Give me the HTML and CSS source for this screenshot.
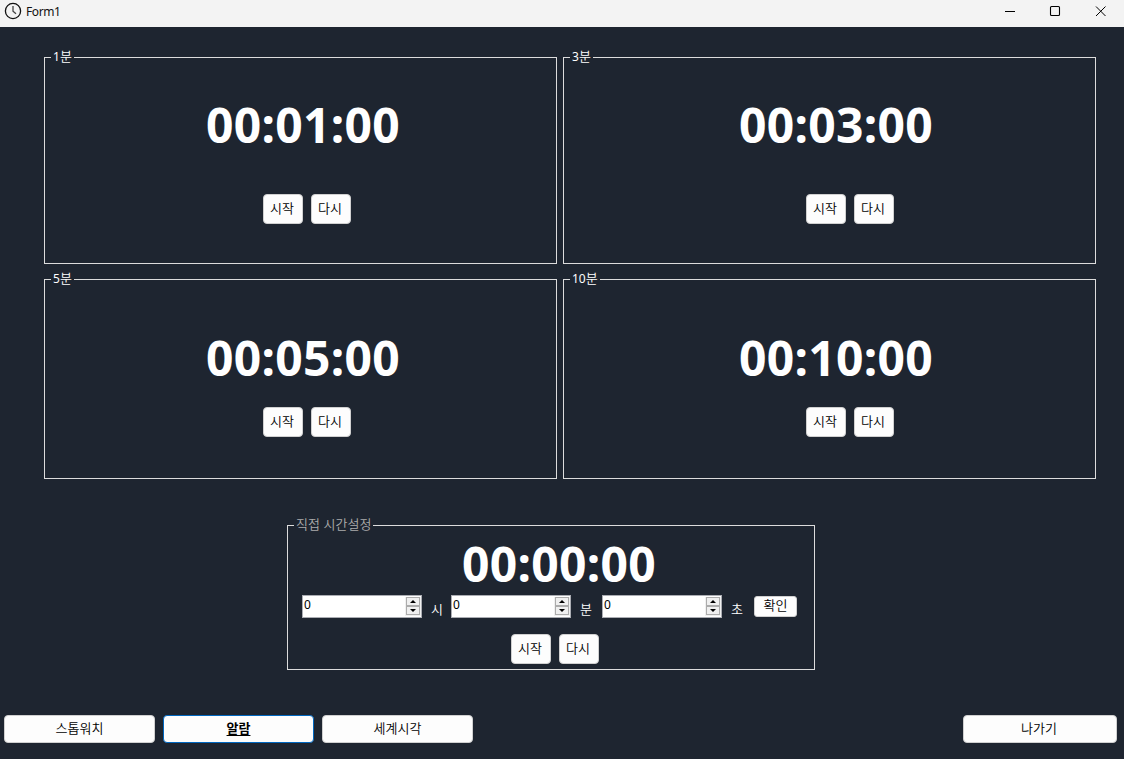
FILE: index.html
```html
<!DOCTYPE html>
<html lang="ko">
<head>
<meta charset="utf-8">
<title>Form1</title>
<link rel="stylesheet" href="styles.css">
</head>
<body>
<header class="titlebar">
  <svg class="app-icon" width="18" height="18" viewBox="0 0 18 18" fill="none" stroke="#111"><circle cx="9" cy="9" r="7.6" stroke-width="1.3"/><path d="M9 4v5.2l3 2.6" stroke="#444" stroke-width="1.3"/></svg>
  <span class="title">Form1</span>
  <div class="window-controls">
    <svg width="46" height="23" viewBox="0 0 46 23"><path d="M19 11.5h10" stroke="#000"/></svg>
    <svg width="46" height="23" viewBox="0 0 46 23"><rect x="18.5" y="6.5" width="9" height="9" rx="1" fill="none" stroke="#000" stroke-width="1.1"/></svg>
    <svg width="46" height="23" viewBox="0 0 46 23"><path d="M18 6.5l9.5 9.5M27.5 6.5l-9.5 9.5" stroke="#000"/></svg>
  </div>
</header>
<main>
  <div class="presets">
    <section class="group upper left"><span class="legend"><span class="n">1</span>분</span>
      <div class="clock">00:01:00</div>
      <div class="actions"><button class="btn">시작</button><button class="btn">다시</button></div></section>
    <section class="group upper right"><span class="legend"><span class="n">3</span>분</span>
      <div class="clock">00:03:00</div>
      <div class="actions"><button class="btn">시작</button><button class="btn">다시</button></div></section>
    <section class="group lower left"><span class="legend"><span class="n">5</span>분</span>
      <div class="clock">00:05:00</div>
      <div class="actions"><button class="btn">시작</button><button class="btn">다시</button></div></section>
    <section class="group lower right"><span class="legend"><span class="n">10</span>분</span>
      <div class="clock">00:10:00</div>
      <div class="actions"><button class="btn">시작</button><button class="btn">다시</button></div></section>
  </div>
  <section class="group custom"><span class="legend">직접 시간설정</span>
    <div class="clock">00:00:00</div>
    <div class="inputs">
      <div class="spinner"><span class="value">0</span><span class="arrows"><svg width="14" height="9" viewBox="0 0 14 9"><path d="M4 6h6L7 3z"/></svg><svg width="14" height="9" viewBox="0 0 14 9"><path d="M4 3h6L7 6z"/></svg></span></div>
      <span class="unit">시</span>
      <div class="spinner"><span class="value">0</span><span class="arrows"><svg width="14" height="9" viewBox="0 0 14 9"><path d="M4 6h6L7 3z"/></svg><svg width="14" height="9" viewBox="0 0 14 9"><path d="M4 3h6L7 6z"/></svg></span></div>
      <span class="unit wide">분</span>
      <div class="spinner"><span class="value">0</span><span class="arrows"><svg width="14" height="9" viewBox="0 0 14 9"><path d="M4 6h6L7 3z"/></svg><svg width="14" height="9" viewBox="0 0 14 9"><path d="M4 3h6L7 6z"/></svg></span></div>
      <span class="unit last">초</span>
      <button class="btn confirm">확인</button>
    </div>
    <div class="actions"><button class="btn">시작</button><button class="btn">다시</button></div>
  </section>
  <nav class="tabs">
    <button class="btn tab">스톱워치</button>
    <button class="btn tab active">알람</button>
    <button class="btn tab">세계시각</button>
    <button class="btn tab exit">나가기</button>
  </nav>
</main>
</body>
</html>
```
FILE: styles.css
```css
* { box-sizing: border-box; }
body {
  margin: 0;
  width: 1124px;
  height: 759px;
  overflow: hidden;
  background: #1e2530;
  color: #fff;
  font: 350 13px/16px "Noto Sans CJK KR", sans-serif;
}
svg { display: block; }
.titlebar {
  display: flex;
  height: 27px;
  padding-left: 4px;
  background: #f3f3f3;
  color: #111;
}
.app-icon { margin-top: 2px; }
.title {
  margin-left: 4px;
  font: 12px/23px "Noto Sans", sans-serif;
  letter-spacing: -0.4px;
}
.window-controls { display: flex; margin-left: auto; }
.presets {
  display: grid;
  grid-template-columns: 513px 533px;
  grid-template-rows: 207px 200px;
  gap: 15px 6px;
  padding: 30px 0 0 44px;
}
.group {
  position: relative;
  border: 1px solid #dcdcdc;
}
.legend {
  position: absolute;
  top: -10px;
  left: 6px;
  padding: 0 2px;
  background: #1e2530;
  white-space: nowrap;
}
.n { font: 12px/16px "Noto Sans", sans-serif; }
.clock {
  height: 60px;
  font: 700 48px/60px "Noto Sans", sans-serif;
  letter-spacing: 0.3px;
}
.left .clock { padding-left: 161px; }
.right .clock { padding-left: 175px; }
.upper .clock { margin-top: 37px; }
.lower .clock { margin-top: 48px; }
.actions { display: flex; gap: 8px; }
.left .actions { padding-left: 218px; }
.right .actions { padding-left: 242px; }
.upper .actions { margin-top: 39px; }
.lower .actions { margin-top: 19px; }
.btn {
  width: 40px;
  height: 30px;
  padding: 0 2px 3px 0;
  border: 1px solid #d0d0d0;
  border-radius: 4px;
  background: #fdfdfd;
  color: #000;
  font: inherit;
}
.custom {
  width: 528px;
  height: 145px;
  margin: 46px 0 0 287px;
}
.custom .legend { color: #acacac; }
.custom .clock { margin-top: 8px; padding-left: 174px; }
.custom .actions { margin-top: 16px; padding-left: 223px; }
.inputs { display: flex; height: 23px; margin-top: 1px; padding-left: 14px; }
.spinner {
  display: flex;
  width: 120px;
  height: 23px;
  padding: 1px 0 1px 1px;
  border: 1px solid #abadb3;
  background: #fff;
  color: #000;
}
.value { flex: 1; font: 12px/16px "Noto Sans", sans-serif; }
.arrows { width: 16px; padding: 0 1px; background: #f0f0f0; }
.arrows svg { outline: 1px solid #acacac; outline-offset: -1px; }
.unit { width: 29px; padding: 6px 0 0 9px; }
.unit.wide { width: 31px; }
.unit.last { width: 32px; }
.confirm { width: 43px; height: 21px; margin-top: 1px; padding-right: 0; border-radius: 3px; line-height: 16px; }
.tabs { display: flex; gap: 8px; margin-top: 45px; padding-left: 4px; }
.tab { width: 151px; height: 28px; padding-right: 0; }
.active {
  border-color: #0067c0;
  font-weight: 700;
  text-decoration: underline;
  text-underline-offset: 2px;
}
.exit { width: 154px; margin: 0 7px 0 auto; padding-right: 2px; }
```
